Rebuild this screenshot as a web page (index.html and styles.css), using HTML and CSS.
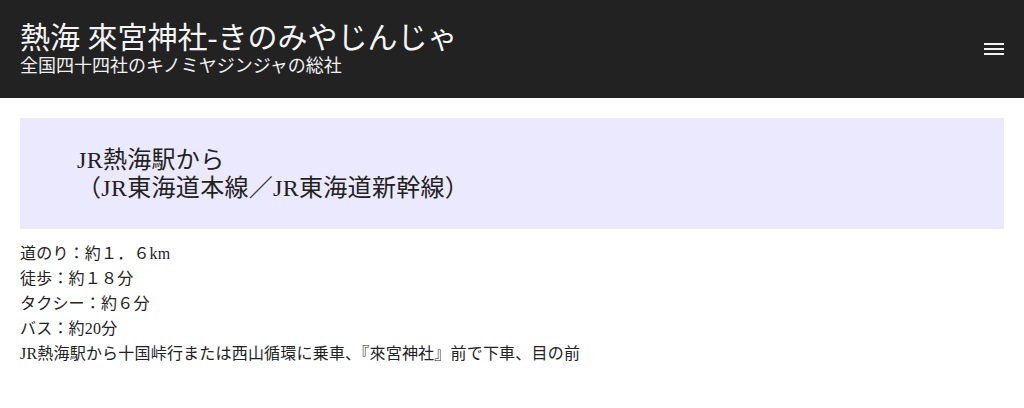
FILE: index.html
```html
<!DOCTYPE html>
<html lang="ja">
<head>
    <meta charset="UTF-8">
    <meta name="viewport" content="width=device-width, initial-scale=1.0">
    <title>熱海 來宮神社-きのみやじんじゃ</title>
    <link rel="stylesheet" href="styles.css">
</head>
<body>
    <header class="site-header">
        <div class="branding">
            <h1 class="site-title">熱海 來宮神社-きのみやじんじゃ</h1>
            <p class="site-desc">全国四十四社のキノミヤジンジャの総社</p>
        </div>
        <button class="menu-toggle" aria-label="メニュー">
            <span></span><span></span><span></span>
        </button>
    </header>

    <main class="content">
        <div class="route-box">
            <h2 class="route-title">JR熱海駅から<br>（JR東海道本線／JR東海道新幹線）</h2>
        </div>
        <p class="route-info">
            道のり：約１．６km<br>
            徒歩：約１８分<br>
            タクシー：約６分<br>
            バス：約20分<br>
            JR熱海駅から十国峠行または西山循環に乗車、『來宮神社』前で下車、目の前
        </p>
    </main>
</body>
</html>
```

FILE: styles.css
```css
body {
    margin: 0;
    font-family: "Liberation Serif", "Noto Sans CJK JP", serif;
    color: #222;
    background: #fff;
}

.site-header {
    display: flex;
    align-items: center;
    justify-content: space-between;
    background-color: #222;
    height: 98px;
    padding: 0 20px;
}

.site-title {
    margin: 0;
    color: #f5f5f5;
    font-size: 30px;
    font-weight: normal;
    line-height: 34px;
}

.site-desc {
    margin: 0;
    color: #f0f0f0;
    font-size: 18px;
    line-height: 22px;
}

.menu-toggle {
    display: flex;
    flex-direction: column;
    gap: 3px;
    padding: 0;
    border: none;
    background: none;
    cursor: pointer;
}

.menu-toggle span {
    display: block;
    width: 20px;
    height: 2px;
    background-color: #f2f2f2;
}

.content {
    padding: 20px 20px 0;
}

.route-box {
    background-color: #ebe9fd;
    padding: 28px 57px 27px;
}

.route-title {
    margin: 0;
    font-size: 24px;
    font-weight: normal;
    line-height: 28px;
    letter-spacing: 0.3px;
}

.route-info {
    margin: 12px 0 0;
    font-size: 16px;
    line-height: 25px;
    color: #222;
    letter-spacing: 0.2px;
}
```
